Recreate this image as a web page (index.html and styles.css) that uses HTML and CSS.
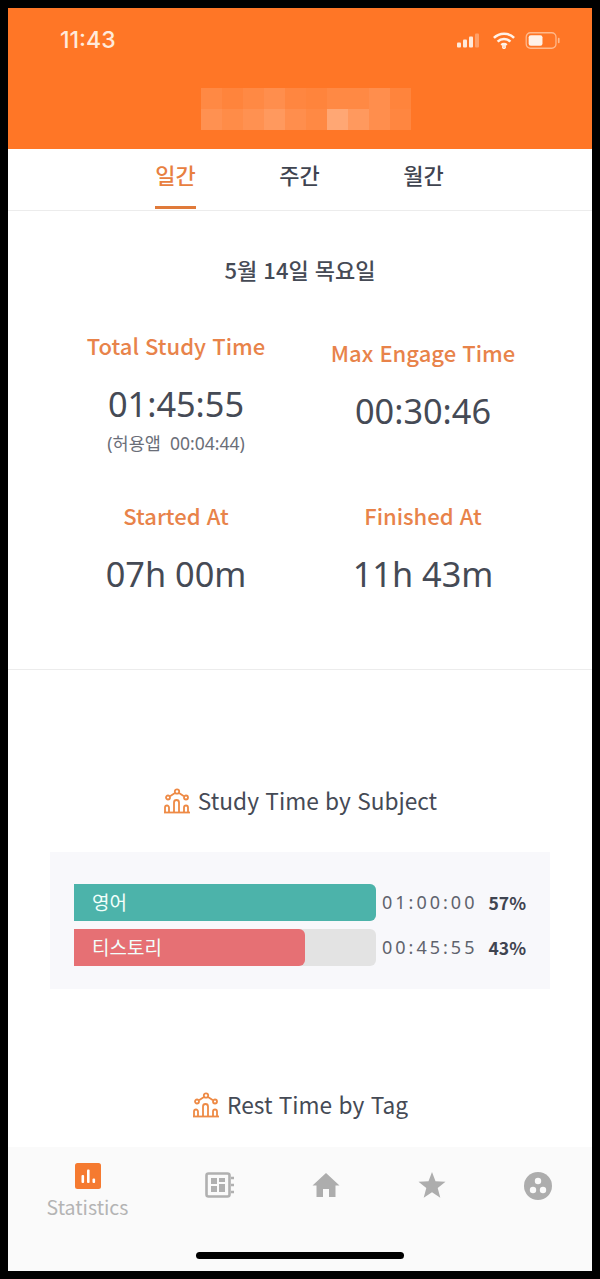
FILE: index.html
```html
<!DOCTYPE html>
<html lang="ko">
<head>
  <meta charset="UTF-8">
  <meta name="viewport" content="width=device-width, initial-scale=1.0">
  <title>Statistics</title>
  <link rel="stylesheet" href="styles.css">
</head>
<body>
  <div class="phone">
    <header class="top">
      <div class="status">
        <span class="clock">11:43</span>
        <div class="status-icons">
          <svg width="26" height="15" viewBox="0 0 26 14">
            <rect x="0" y="9" width="4" height="5" rx="1" fill="#ffeadb"/>
            <rect x="6" y="6" width="4" height="8" rx="1" fill="#ffeadb"/>
            <rect x="12" y="3" width="4" height="11" rx="1" fill="#ffeadb"/>
            <rect x="18" y="0" width="4" height="14" rx="1" fill="#ffa068"/>
          </svg>
          <svg width="24" height="17" viewBox="0 0 22 16" fill="none" stroke="#fff2e8" stroke-width="2.4">
            <path d="M1.5 5.5a13.5 13.5 0 0 1 19 0"/>
            <path d="M5 9a8.5 8.5 0 0 1 12 0"/>
            <path d="M8.5 12.3a3.6 3.6 0 0 1 5 0"/>
            <circle cx="11" cy="14.2" r="0.7"/>
          </svg>
          <svg width="36" height="17" viewBox="0 0 33 16">
            <rect x="0.7" y="0.7" width="28" height="14.6" rx="4" fill="none" stroke="#ffb98c" stroke-width="1.2"/>
            <rect x="3" y="3" width="13" height="10" rx="2" fill="#fff2e8"/>
            <rect x="30.5" y="5.5" width="1.6" height="5" rx="0.8" fill="#ffb98c"/>
          </svg>
        </div>
      </div>
      <svg class="blurred" width="210" height="42" viewBox="0 0 200 42" preserveAspectRatio="none">
        <g fill="#fff">
          <rect x="0" y="0" width="20" height="21" opacity=".14"/>
          <rect x="20" y="0" width="20" height="21" opacity=".1"/>
          <rect x="40" y="0" width="20" height="21" opacity=".14"/>
          <rect x="60" y="0" width="20" height="21" opacity=".18"/>
          <rect x="80" y="0" width="20" height="21" opacity=".12"/>
          <rect x="100" y="0" width="20" height="21" opacity=".1"/>
          <rect x="120" y="0" width="20" height="21" opacity=".14"/>
          <rect x="140" y="0" width="20" height="21" opacity=".14"/>
          <rect x="160" y="0" width="20" height="21" opacity=".18"/>
          <rect x="180" y="0" width="20" height="21" opacity=".1"/>
          <rect x="0" y="21" width="20" height="21" opacity=".2"/>
          <rect x="20" y="21" width="20" height="21" opacity=".16"/>
          <rect x="40" y="21" width="20" height="21" opacity=".2"/>
          <rect x="60" y="21" width="20" height="21" opacity=".26"/>
          <rect x="80" y="21" width="20" height="21" opacity=".18"/>
          <rect x="100" y="21" width="20" height="21" opacity=".14"/>
          <rect x="120" y="21" width="20" height="21" opacity=".36"/>
          <rect x="140" y="21" width="20" height="21" opacity=".26"/>
          <rect x="160" y="21" width="20" height="21" opacity=".18"/>
          <rect x="180" y="21" width="20" height="21" opacity=".12"/>
        </g>
      </svg>
    </header>

    <nav class="tabs">
      <a class="tab tab-on">일간</a>
      <a class="tab">주간</a>
      <a class="tab">월간</a>
    </nav>

    <main class="content">
      <section class="summary">
        <h2 class="date">5월 14일 목요일</h2>
        <div class="stats">
          <div class="stat">
            <div class="stat-label">Total Study Time</div>
            <div class="stat-value">01:45:55</div>
            <div class="stat-sub">(허용앱 &nbsp;00:04:44)</div>
          </div>
          <div class="stat stat-low">
            <div class="stat-label">Max Engage Time</div>
            <div class="stat-value">00:30:46</div>
          </div>
          <div class="stat">
            <div class="stat-label">Started At</div>
            <div class="stat-value">07h 00m</div>
          </div>
          <div class="stat">
            <div class="stat-label">Finished At</div>
            <div class="stat-value">11h 43m</div>
          </div>
        </div>
      </section>

      <section class="subject">
        <h3 class="chart-title">
          <svg class="chart-icon" width="28" height="26" viewBox="0 0 28 26" fill="none" stroke="#ee8a45" stroke-width="1.8">
            <circle cx="14" cy="3.5" r="2.2"/>
            <circle cx="5" cy="9.5" r="2"/>
            <circle cx="23" cy="9.5" r="2"/>
            <path d="M7 8.3l5-3.2M16 5.1l5 3.2"/>
            <path d="M2 24.5v-5a2 2 0 0 1 4 0v5M11 24.5v-10a2.5 2.5 0 0 1 5 0v10M21 24.5v-5a2 2 0 0 1 4 0v5"/>
            <path d="M1 24.5h26"/>
          </svg>
          Study Time by Subject
        </h3>
        <div class="chart-card">
          <div class="bar-row">
            <div class="bar-track">
              <div class="bar-fill bar-teal" style="width: 100%">영어</div>
            </div>
            <span class="bar-time">01:00:00</span>
            <span class="bar-pct">57%</span>
          </div>
          <div class="bar-row">
            <div class="bar-track">
              <div class="bar-fill bar-red" style="width: 76.5%">티스토리</div>
            </div>
            <span class="bar-time">00:45:55</span>
            <span class="bar-pct">43%</span>
          </div>
        </div>
      </section>

      <h3 class="chart-title rest-title">
        <svg class="chart-icon" width="28" height="26" viewBox="0 0 28 26" fill="none" stroke="#ee8a45" stroke-width="1.8">
          <circle cx="14" cy="3.5" r="2.2"/>
          <circle cx="5" cy="9.5" r="2"/>
          <circle cx="23" cy="9.5" r="2"/>
          <path d="M7 8.3l5-3.2M16 5.1l5 3.2"/>
          <path d="M2 24.5v-5a2 2 0 0 1 4 0v5M11 24.5v-10a2.5 2.5 0 0 1 5 0v10M21 24.5v-5a2 2 0 0 1 4 0v5"/>
          <path d="M1 24.5h26"/>
        </svg>
        Rest Time by Tag
      </h3>
    </main>

    <footer class="bottom">
      <div class="bottom-nav">
        <a class="nav-item">
          <svg width="26" height="26" viewBox="0 0 26 26">
            <rect width="26" height="26" rx="2.5" fill="#f57a30"/>
            <rect x="6.5" y="12" width="2.6" height="8" rx="1" fill="#fff"/>
            <rect x="12" y="6.5" width="2.6" height="13.5" rx="1" fill="#fff"/>
            <rect x="17.5" y="15.5" width="2.6" height="4.5" rx="1" fill="#fff"/>
          </svg>
          <span class="nav-label">Statistics</span>
        </a>
        <a class="nav-item">
          <svg width="30" height="26" viewBox="0 0 30 26">
            <rect x="1.5" y="1.5" width="23" height="23" rx="2" fill="none" stroke="#b0b0b0" stroke-width="2.6"/>
            <rect x="6" y="6" width="6" height="6" fill="#b0b0b0"/>
            <rect x="14" y="6" width="6" height="4" fill="#b0b0b0"/>
            <rect x="6" y="14" width="6" height="6" fill="#b0b0b0"/>
            <rect x="14" y="12" width="6" height="8" fill="#b0b0b0"/>
            <path d="M26 6h3M26 13h3M26 20h3" stroke="#b0b0b0" stroke-width="2.4"/>
          </svg>
        </a>
        <a class="nav-item">
          <svg width="28" height="26" viewBox="0 0 28 26">
            <path d="M14 1L0.5 13.5H4.5V25H11V17H17V25H23.5V13.5H27.5Z" fill="#adadad"/>
          </svg>
        </a>
        <a class="nav-item">
          <svg width="28" height="26" viewBox="0 0 28 26">
            <path d="M14 0l3.5 9.3 10 .5-7.8 6.3 2.6 9.6L14 20.3l-8.3 5.4 2.6-9.6L.5 9.8l10-.5z" fill="#adadad"/>
          </svg>
        </a>
        <a class="nav-item">
          <svg width="30" height="28" viewBox="0 0 30 28">
            <circle cx="15" cy="14" r="14" fill="#adadad"/>
            <circle cx="15" cy="9" r="3.2" fill="#fafafa"/>
            <circle cx="10" cy="18" r="3.2" fill="#fafafa"/>
            <circle cx="20" cy="18" r="3.2" fill="#fafafa"/>
          </svg>
        </a>
      </div>
      <div class="home-bar"></div>
    </footer>
  </div>
</body>
</html>
```

FILE: styles.css
```css
* {
  box-sizing: border-box;
}

html, body {
  margin: 0;
  height: 100%;
}

body {
  background-color: #000;
  padding: 8px;
  font-family: "Noto Sans CJK KR", "Noto Sans", sans-serif;
  color: #3f4450;
}

.phone {
  height: 1263px;
  background-color: #fff;
  display: flex;
  flex-direction: column;
  overflow: hidden;
}

/* header */
.top {
  height: 141px;
  flex: none;
  background-color: #ff7626;
  display: flex;
  flex-direction: column;
  align-items: center;
}

.status {
  width: 100%;
  height: 80px;
  padding: 16px 31px 0 52px;
  display: flex;
  justify-content: space-between;
  align-items: flex-start;
}

.clock {
  font-family: Inter, "Liberation Sans", sans-serif;
  font-size: 23px;
  line-height: 32px;
  font-weight: 500;
  color: #ffeadb;
}

.status-icons {
  display: flex;
  align-items: center;
  gap: 9px;
  height: 32px;
}

.blurred {
  display: block;
  margin-left: 12px;
}

/* tabs */
.tabs {
  height: 62px;
  flex: none;
  display: flex;
  justify-content: center;
  gap: 83px;
  padding-right: 1px;
  border-bottom: 1px solid #ececec;
}

.tab {
  width: 41px;
  font-size: 22px;
  line-height: 50px;
  font-weight: 500;
  text-align: center;
  white-space: nowrap;
  color: #3f4450;
}

.tab-on {
  height: 60px;
  color: #e8803f;
  border-bottom: 3px solid #e07a3a;
}

/* summary */
.content {
  flex: 1;
  min-height: 0;
}

.summary {
  height: 459px;
  border-bottom: 1px solid #ececec;
  padding-top: 41px;
}

.date {
  margin: 0;
  font-size: 22px;
  line-height: 34px;
  font-weight: 500;
  text-align: center;
  color: #454a55;
}

.stats {
  margin: 43px 0 0 44px;
  width: 494px;
  display: grid;
  grid-template-columns: 248px 246px;
  grid-auto-rows: 170px;
}

.stat {
  text-align: center;
}

.stat-low {
  padding-top: 7px;
}

.stat-label {
  font-size: 22px;
  line-height: 32px;
  font-weight: 500;
  color: #e8834a;
}

.stat-value {
  margin-top: 17px;
  font-family: "Noto Sans", "Noto Sans CJK KR", sans-serif;
  font-size: 34.3px;
  line-height: 52px;
  color: #454a55;
}

.stat-sub {
  margin-top: 1px;
  font-family: "Noto Sans", "Noto Sans CJK KR", sans-serif;
  font-size: 17.5px;
  line-height: 24px;
  color: #6a6e78;
}

/* charts */
.subject {
  padding-top: 111px;
}

.chart-title {
  margin: 0;
  display: flex;
  justify-content: center;
  align-items: center;
  gap: 7px;
  font-size: 22.7px;
  line-height: 40px;
  font-weight: 400;
  color: #454a55;
}

.chart-card {
  margin: 31px 42px 0;
  height: 137px;
  padding: 32px 24px 0;
  background-color: #f8f8fb;
  display: flex;
  flex-direction: column;
  gap: 8px;
}

.bar-row {
  display: flex;
  align-items: center;
  height: 37px;
}

.bar-track {
  width: 302px;
  height: 37px;
  flex: none;
  background-color: #e3e3e3;
  border-radius: 0 6px 6px 0;
}

.bar-fill {
  height: 100%;
  padding-left: 18px;
  border-radius: 0 6px 6px 0;
  font-size: 19px;
  line-height: 35px;
  color: #f2fffb;
}

.bar-teal {
  background-color: #4cb3aa;
}

.bar-red {
  background-color: #e67074;
}

.bar-time {
  margin-left: 6px;
  width: 101px;
  font-family: "Noto Sans", "Noto Sans CJK KR", sans-serif;
  font-size: 18px;
  line-height: 33px;
  letter-spacing: 3px;
  color: #5f636d;
  white-space: nowrap;
}

.bar-pct {
  margin-left: 6px;
  font-size: 17.5px;
  line-height: 33px;
  font-weight: 700;
  color: #3f4450;
}

.rest-title {
  margin-top: 96px;
}

/* bottom nav */
.bottom {
  height: 124px;
  flex: none;
  background-color: #fafafa;
  display: flex;
  flex-direction: column;
  align-items: center;
}

.bottom-nav {
  width: 100%;
  height: 105px;
  padding-top: 16px;
  display: grid;
  grid-template-columns: 159px repeat(4, 106px);
}

.nav-item {
  display: flex;
  flex-direction: column;
  align-items: center;
  padding-top: 9px;
}

.nav-item:first-child {
  padding-top: 0;
}

.nav-label {
  margin-top: 3px;
  font-size: 19.5px;
  line-height: 30px;
  color: #b4b4b4;
}

.home-bar {
  width: 208px;
  height: 7px;
  border-radius: 4px;
  background-color: #000;
}
```
